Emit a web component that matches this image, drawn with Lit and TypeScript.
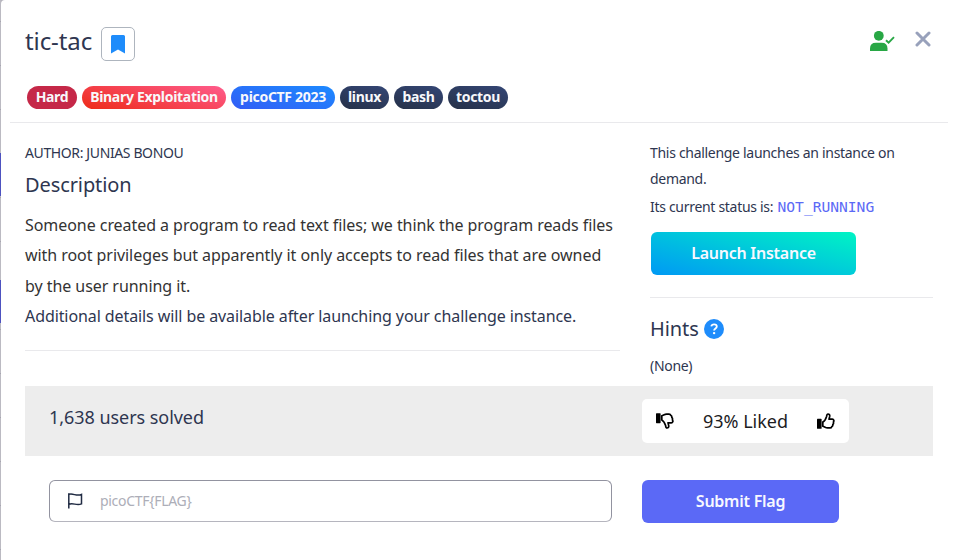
import { LitElement, html, css, svg } from "lit";
import { customElement } from "lit/decorators.js";

const thumb = svg`<rect x="0" y="5.8" width="4.6" height="10" rx=".6" fill="currentColor"/>
  <path d="M5.8 13.2V9.1C7.6 8.2 8.8 5.9 9.6 3.4C9.8 1.8 10.2 1 11 1C12.4 1 12.9 2.1 12.7 3.4L12 6.2H15.3C16.9 6.2 17.3 7.9 16.4 9C16.7 10 16.5 11 15.8 11.5C16 12.5 15.6 13.3 14.7 13.7C14.5 14.6 13.9 14.9 13 14.9H10.6C8.7 14.9 7.5 13.7 5.8 13.2Z" fill="none" stroke="currentColor" stroke-width="1.7" stroke-linejoin="round"/>`;

@customElement("app-root")
export class AppRoot extends LitElement {
  static styles = css`
    :host {
      display: flex;
      height: 560px;
      overflow: hidden;
      font-family: "Noto Sans", sans-serif;
      color: #2e3650;
      background: #b5b4bd;
    }
    * { box-sizing: border-box; }
    svg { display: block; flex: none; }
    .backdrop {
      width: 1px;
      flex: none;
      background: linear-gradient(#4d52c0, #4d52c0) 0 153px / 1px 43px no-repeat,
        linear-gradient(#4d52c0, #4d52c0) 0 280px / 1px 43px no-repeat,
        repeating-linear-gradient(#bbbac2 0 43px, #a6a5b0 43px 44px) 0 -22px / 1px 600px;
    }
    .modal {
      flex: 1;
      min-width: 0;
      background: #fff;
      border-top-left-radius: 4px;
    }
    .top {
      height: 61px;
      margin: 0 9px 0 24px;
      padding: 27px 6px 0 0;
      display: flex;
    }
    .title { font-size: 24px; line-height: 29px; margin: -1px 9px 0 0; letter-spacing: -.1px; }
    .mark {
      width: 34px;
      height: 34px;
      border: 1px solid #aeb5be;
      border-radius: 5px;
      display: grid;
      place-items: center;
    }
    .spacer { flex: 1; }
    .solved { margin: 4px 20px 0 0; }
    .close { margin: 4px 7px 0 0; }
    .tags { display: flex; gap: 5px; padding: 25px 0 0 26px; }
    .tag {
      height: 23px;
      border-radius: 12px;
      font-size: 14px;
      line-height: 22px;
      font-weight: 700;
      letter-spacing: -.3px;
      color: #f8f8fb;
      white-space: nowrap;
      background: linear-gradient(15deg, #263148, #344675);
      text-align: center;
    }
    .hard { background: #c52848; width: 50px; }
    .binary { background: linear-gradient(15deg, #ed2b18, #ff5c8d); width: 144px; }
    .event { background: linear-gradient(15deg, #335df5, #1c8aff); width: 104px; }
    .linux, .bash { width: 49px; }
    .toctou { width: 60px; }
    .rule { height: 1px; background: #e9e9ec; }
    .head { margin: 13px 5px 0 9px; }
    .cols { display: flex; height: 263px; padding: 0 20px 0 24px; gap: 30px; }
    .main { width: 595px; }
    .side { flex: 1; }
    .author { font-size: 14px; line-height: 20px; padding-top: 20px; letter-spacing: -.38px; }
    h4 { font-size: 20px; line-height: 24px; font-weight: 400; margin: 0; letter-spacing: -.1px; }
    .main h4 { margin-top: 10px; }
    .text { font-size: 16px; line-height: 30.3px; margin-top: 13px; white-space: nowrap; letter-spacing: -.09px; }
    .story { color: #333; letter-spacing: -.055px; }
    .main .rule { margin-top: 19px; }
    .note { font-size: 14px; line-height: 26px; letter-spacing: -.3px; white-space: nowrap; }
    .side .note:first-child { padding-top: 17px; }
    .status { margin-top: 2px; }
    .code { font-family: "DejaVu Sans Mono", monospace; font-size: 14.6px; line-height: 1; letter-spacing: 0; margin-left: 1px; color: #5b69f6; }
    .btn {
      display: flex;
      align-items: center;
      justify-content: center;
      height: 43px;
      padding-bottom: 2px;
      border-radius: 6px;
      color: #f7f8ff;
      font-size: 16px;
      font-weight: 600;
      line-height: 24px;
      letter-spacing: -.25px;
    }
    .launch { width: 205px; margin: 12px 0 22px 1px; background: linear-gradient(15deg, #0099f4, #00f4c4); }
    .hints { display: flex; gap: 5px; margin-top: 18px; align-items: center; }
    .hints h4 { padding-top: 1px; }
    .none { margin-top: 12px; }
    .stats {
      height: 70px;
      margin: 0 20px 0 24px;
      background: #ededed;
      display: flex;
      font-size: 18px;
      line-height: 24px;
    }
    .count { width: 617px; padding: 19px 0 0 24px; letter-spacing: -.05px; }
    .liked {
      width: 207px;
      height: 44px;
      margin-top: 13px;
      border-radius: 5px;
      background: #fff;
      color: #1d1d1f;
      display: flex;
      align-items: center;
      justify-content: space-between;
      padding: 0 14px;
    }
    .thumb { color: #000; }
    .submit { display: flex; gap: 30px; padding: 24px 0 0 48px; }
    .field {
      width: 563px;
      height: 42px;
      border: 1px solid #9293a0;
      border-bottom-color: #b5b5be;
      border-radius: 6px;
      display: flex;
      align-items: center;
      gap: 17px;
      padding-left: 18px;
      font-size: 14px;
      color: #adaeb8;
    }
    .field span { padding-bottom: 1px; letter-spacing: -.3px; }
    .send { width: 197px; background: #5b69f6; }
  `;

  render() {
    return html`
      <div class="backdrop"></div>
      <div class="modal">
        <div class="top">
          <div class="title">tic-tac</div>
          <div class="mark">
            <svg width="14" height="19" viewBox="0 0 14 19"><path d="M1.5 0H12.5Q14 0 14 1.5V18.6L7 14.4L0 18.6V1.5Q0 0 1.5 0Z" fill="#1e8cfb"/></svg>
          </div>
          <div class="spacer"></div>
          <svg class="solved" width="25" height="20" viewBox="0 0 25 20">
            <circle cx="8.8" cy="4.8" r="4.9" fill="#28a745"/>
            <path d="M0 20V17.5Q0 11.8 6 11.8H11.6Q17.5 11.8 17.5 17.5V20Z" fill="#28a745"/>
            <path d="M16 9.2L18.6 11.6L24 6.2" fill="none" stroke="#28a745" stroke-width="1.9"/>
          </svg>
          <svg class="close" width="16" height="16" viewBox="0 0 16 16"><path d="M2 2L14 14M14 2L2 14" stroke="#98a1bb" stroke-width="3" stroke-linecap="round"/></svg>
        </div>
        <div class="tags">
          <span class="tag hard">Hard</span>
          <span class="tag binary">Binary Exploitation</span>
          <span class="tag event">picoCTF 2023</span>
          <span class="tag linux">linux</span>
          <span class="tag bash">bash</span>
          <span class="tag toctou">toctou</span>
        </div>
        <div class="rule head"></div>
        <div class="cols">
          <div class="main">
            <div class="author">AUTHOR: JUNIAS BONOU</div>
            <h4>Description</h4>
            <div class="text">
              <div class="story">Someone created a program to read text files; we think the program reads files<br />with root privileges but apparently it only accepts to read files that are owned<br />by the user running it.</div>
              <div>Additional details will be available after launching your challenge instance.</div>
            </div>
            <div class="rule"></div>
          </div>
          <div class="side">
            <div class="note">This challenge launches an instance on<br />demand.</div>
            <div class="note status">Its current status is: <span class="code">NOT_RUNNING</span></div>
            <div class="btn launch">Launch Instance</div>
            <div class="rule"></div>
            <div class="hints">
              <h4>Hints</h4>
              <svg width="20" height="20" viewBox="0 0 20 20"><circle cx="10" cy="10" r="10" fill="#1e8cfb"/><path d="M7.3 7.4C7.6 5.9 8.7 5.3 10.1 5.3C11.7 5.3 12.8 6.2 12.8 7.5C12.8 9.5 10.1 9.3 10.1 11.5" fill="none" stroke="#fff" stroke-width="1.8"/><circle cx="10.1" cy="14.1" r="1.2" fill="#fff"/></svg>
            </div>
            <div class="note none">(None)</div>
          </div>
        </div>
        <div class="stats">
          <div class="count">1,638 users solved</div>
          <div class="liked">
            <svg class="thumb" width="18" height="17" viewBox="0 0 18 17"><g transform="translate(0 16) scale(1 -1)">${thumb}</g></svg>
            <span>93% Liked</span>
            <svg class="thumb" width="18" height="17" viewBox="0 0 18 17">${thumb}</svg>
          </div>
        </div>
        <div class="submit">
          <div class="field">
            <svg width="15" height="16" viewBox="0 0 15 16"><path d="M.8 .2V15.4M.8 1.4C5.2 -.1 8.5 3.7 13.5 1.5V10.9C8.5 13.1 5.2 9.3 .8 11.3" fill="none" stroke="#202b43" stroke-width="1.5"/></svg>
            <span>picoCTF{FLAG}</span>
          </div>
          <div class="btn send">Submit Flag</div>
        </div>
      </div>
    `;
  }
}
